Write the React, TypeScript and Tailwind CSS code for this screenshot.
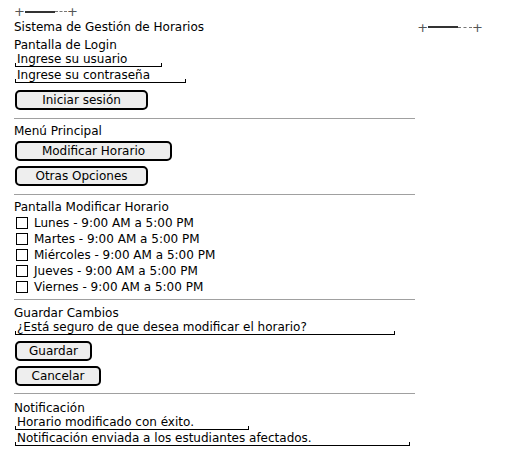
import React from 'react';

const Plus: React.FC<{ solid?: number; dashed?: number }> = ({ solid = 30, dashed = 12 }) => (
  <div className="flex items-center text-[13px] leading-none text-[#555]">
    <span>+</span>
    <span className="h-[2px] bg-[#333]" style={{ width: solid }}></span>
    <span className="border-t border-dashed border-[#777]" style={{ width: dashed }}></span>
    <span>+</span>
  </div>
);

const Field: React.FC<{ text: string; width: number; tall?: boolean }> = ({ text, width, tall }) => (
  <div className={`${tall ? 'h-[17px]' : 'h-[16px]'} pl-[1px]`}>
    <div className="relative mt-[1px] h-[14px] border-b border-black pl-[2px] leading-[13px]" style={{ width }}>
      {text}
      <span className="absolute left-0 -bottom-px w-px h-[4px] bg-black"></span>
      <span className="absolute right-0 -bottom-px w-px h-[4px] bg-black"></span>
    </div>
  </div>
);

const Button: React.FC<{ label: string; width: number; top: string }> = ({ label, width, top }) => (
  <div className={`pl-[1px] ${top}`}>
    <div
      className="h-[20px] border-2 border-black rounded-[5px] bg-[#eeeeee] flex items-center justify-center leading-none"
      style={{ width }}
    >
      {label}
    </div>
  </div>
);

const Separator: React.FC<{ top: string; height: string }> = ({ top, height }) => (
  <div className={height}>
    <div className={`${top} w-[401px] h-px bg-[#a0a0a0]`}></div>
  </div>
);

const Label: React.FC<{ text: string }> = ({ text }) => (
  <div className="h-[16px] pt-[2px] flex items-center leading-none">{text}</div>
);

const Check: React.FC<{ text: string }> = ({ text }) => (
  <div className="h-[16px] pt-[1px] flex items-center gap-[6px] pl-[2px] leading-none">
    <span className="w-[12px] h-[12px] border-[1.5px] border-black"></span>
    <span>{text}</span>
  </div>
);

export default function App() {
  const days = ['Lunes', 'Martes', 'Miércoles', 'Jueves', 'Viernes'];
  return (
    <div className="w-[521px] h-[458px] bg-white text-black text-[12px] font-['DejaVu_Sans',sans-serif]">
      <div className="flex flex-col pl-[14px] pt-[2px]">
        <div className="h-[16px] pt-[3px] flex items-center">
          <Plus />
        </div>
        <div className="h-[16px] pt-[2px] flex items-center justify-between w-[469px] leading-none">
          <span>Sistema de Gestión de Horarios</span>
          <Plus solid={30} dashed={14} />
        </div>
        <div className="h-[2px]"></div>
        <Label text="Pantalla de Login" />
        <Field text="Ingrese su usuario" width={147} />
        <Field text="Ingrese su contraseña" width={171} tall />
        <Button label="Iniciar sesión" width={133} top="mt-[5px]" />
        <Separator top="mt-[8px]" height="h-[12px]" />
        <Label text="Menú Principal" />
        <Button label="Modificar Horario" width={157} top="mt-[3px]" />
        <Button label="Otras Opciones" width={133} top="mt-[5px]" />
        <Separator top="mt-[8px]" height="h-[12px]" />
        <Label text="Pantalla Modificar Horario" />
        {days.map((d) => (
          <Check key={d} text={`${d} - 9:00 AM a 5:00 PM`} />
        ))}
        <Separator top="mt-[5px]" height="h-[10px]" />
        <Label text="Guardar Cambios" />
        <Field text="¿Está seguro de que desea modificar el horario?" width={380} />
        <Button label="Guardar" width={77} top="mt-[5px]" />
        <Button label="Cancelar" width={86} top="mt-[5px]" />
        <Separator top="mt-[7px]" height="h-[13px]" />
        <Label text="Notificación" />
        <Field text="Horario modificado con éxito." width={234} />
        <Field text="Notificación enviada a los estudiantes afectados." width={395} />
      </div>
    </div>
  );
}
